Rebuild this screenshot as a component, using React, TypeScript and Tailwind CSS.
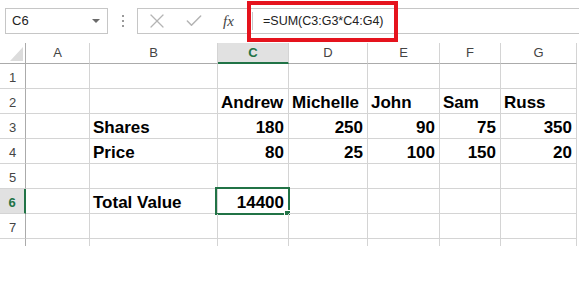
import { X, Check } from 'lucide-react';

const cols = ['A', 'B', 'C', 'D', 'E', 'F', 'G'];

// one entry per row, 7 cells (A..G); right = right aligned number
type Cell = { text: string; right?: boolean };
const rows: Cell[][] = [
  [],
  [{ text: '' }, { text: '' }, { text: 'Andrew' }, { text: 'Michelle' }, { text: 'John' }, { text: 'Sam' }, { text: 'Russ' }],
  [{ text: '' }, { text: 'Shares' }, { text: '180', right: true }, { text: '250', right: true }, { text: '90', right: true }, { text: '75', right: true }, { text: '350', right: true }],
  [{ text: '' }, { text: 'Price' }, { text: '80', right: true }, { text: '25', right: true }, { text: '100', right: true }, { text: '150', right: true }, { text: '20', right: true }],
  [],
  [{ text: '' }, { text: 'Total Value' }, { text: '14400', right: true }],
  [],
];

const FormulaBar = () => (
  <div className="relative flex h-[43px] items-start pt-[8px] font-['Liberation_Sans',Arial,sans-serif]">
    {/* name box */}
    <div className="ml-[5px] flex h-[26px] w-[103px] items-center justify-between border border-[#c6c6c6] pl-[6px] pr-[7px] text-[13px] text-[#222]">
      <span>C6</span>
      <svg width="8" height="4" viewBox="0 0 8 4">
        <path d="M0 0h8L4 4z" fill="#6a6a6a" />
      </svg>
    </div>
    <div className="flex h-[26px] w-[29px] flex-col items-center justify-center gap-[3px]">
      <span className="h-[2px] w-[2px] bg-[#9a9a9a]" />
      <span className="h-[2px] w-[2px] bg-[#9a9a9a]" />
      <span className="h-[2px] w-[2px] bg-[#9a9a9a]" />
    </div>
    {/* formula box */}
    <div className="flex h-[26px] flex-1 border-y border-l border-[#c6c6c6]">
      <div className="flex w-[114px] items-center">
        <X className="ml-[7px] h-[24px] w-[24px] text-[#b4b4b4]" strokeWidth={1.2} />
        <Check className="ml-[15px] h-[20px] w-[20px] text-[#b4b4b4]" strokeWidth={1.8} />
        <span className="ml-[19px] font-['Liberation_Serif',serif] text-[15px] italic text-[#444]">fx</span>
      </div>
      <div className="my-[3px] flex flex-1 items-center border-l border-[#c6c6c6] pl-[10px] text-[12.5px] text-[#222]">
        =SUM(C3:G3*C4:G4)
      </div>
    </div>
    {/* red highlight */}
    <div className="absolute left-[247px] top-[1px] h-[41px] w-[151px] border-4 border-[#e5131d]" />
  </div>
);

const Sheet = () => (
  <div className="grid grid-cols-[26px_64px_128px_71px_79px_72px_61px_76px] grid-rows-[21px_repeat(7,25px)_7px] font-['Liberation_Sans',Arial,sans-serif]">
    {/* corner */}
    <div className="flex items-end justify-end border-b border-r border-[#ababab] pb-[2px] pr-[2px]">
      <svg width="13" height="14" viewBox="0 0 13 14">
        <path d="M13 0V14H0z" fill="#dcdcdc" />
      </svg>
    </div>
    {cols.map((c) =>
      c === 'C' ? (
        <div
          key={c}
          className="flex items-center justify-center border-b-2 border-r border-b-[#217346] border-r-[#d4d4d4] bg-[#e1e1e1] text-[13px] font-bold text-[#217346]"
        >
          {c}
        </div>
      ) : (
        <div key={c} className="flex items-center justify-center border-b border-r border-b-[#ababab] border-r-[#d4d4d4] text-[13px] text-[#444]">
          {c}
        </div>
      )
    )}

    {rows.map((row, r) => {
      const n = r + 1;
      const active = n === 6;
      return [
        <div
          key={`h${n}`}
          className={
            active
              ? 'flex items-end justify-center border-b border-r-2 border-b-[#d4d4d4] border-r-[#217346] bg-[#e1e1e1] pb-[4px] text-[13px] font-bold leading-none text-[#217346]'
              : 'flex items-end justify-center border-b border-r border-b-[#d4d4d4] border-r-[#ababab] pb-[4px] text-[13px] leading-none text-[#444]'
          }
        >
          {n}
        </div>,
        ...cols.map((c, i) => {
          const cell = row[i];
          const selected = active && c === 'C';
          return (
            <div
              key={`${c}${n}`}
              className={`relative flex items-end border-b border-r border-[#d4d4d4] pb-[2px] text-[17px] font-bold leading-none text-black ${
                cell?.right ? 'justify-end pr-[4px]' : 'pl-[3px]'
              }`}
            >
              <span className="whitespace-nowrap">{cell?.text}</span>
              {selected && (
                <>
                  <div className="absolute left-[-3px] top-[-2px] h-[28px] w-[75px] border-2 border-[#217346]" />
                  <div className="absolute left-[66px] top-[21px] h-[6px] w-[7px] border border-white bg-[#217346]" />
                </>
              )}
            </div>
          );
        }),
      ];
    })}

    {/* stub below row 7 */}
    <div className="border-r border-[#ababab]" />
    {cols.map((c) => (
      <div key={`s${c}`} className="border-r border-[#d4d4d4]" />
    ))}
  </div>
);

export default function App() {
  return (
    <div className="h-[287px] w-[579px] overflow-hidden bg-white">
      <FormulaBar />
      <Sheet />
    </div>
  );
}
